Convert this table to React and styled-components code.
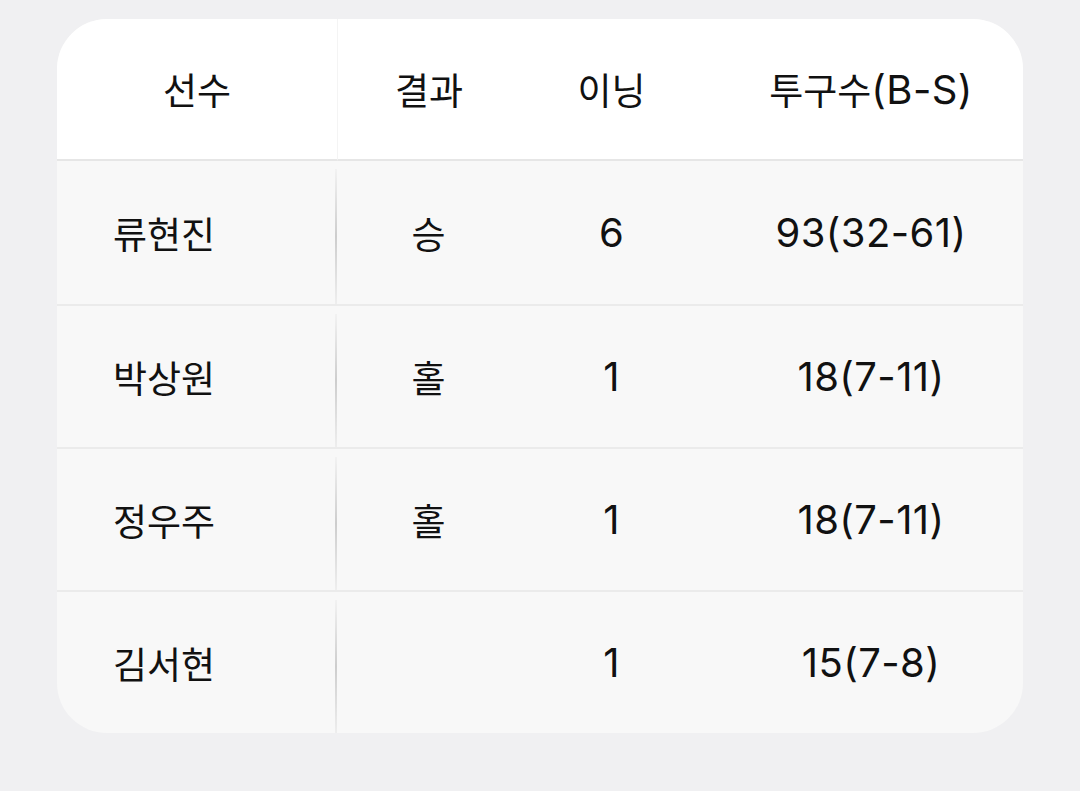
import React from 'react';
import styled, { createGlobalStyle } from 'styled-components';

const Global = createGlobalStyle`
  html, body {
    margin: 0;
    padding: 0;
    background: #f0f0f2;
  }
  body {
    font-family: Inter, "Noto Sans CJK KR", "Noto Sans", sans-serif;
    color: #111;
  }
`;

const Page = styled.div`
  width: 1080px;
  height: 791px;
  padding: 19px 0 0 57px;
  box-sizing: border-box;
`;

const Card = styled.div`
  width: 966px;
  border-radius: 50px;
  overflow: hidden;
  background: #f8f8f8;
  display: grid;
  grid-template-columns: 280px 183px 183px 1fr;
  grid-template-rows: 142px repeat(4, 143px);
`;

const HeadCell = styled.div`
  background: #fff;
  display: flex;
  align-items: center;
  justify-content: center;
  font-size: 37px;
  padding-left: ${(p) => (p.$wide ? '16px' : '0')};
  border-bottom: 2px solid #e6e6e6;
  border-left: ${(p) => (p.$divider ? '1px solid #f4f4f4' : 'none')};
`;

const Cell = styled.div`
  position: relative;
  display: flex;
  align-items: center;
  justify-content: ${(p) => (p.$left ? 'flex-start' : 'center')};
  padding-left: ${(p) => (p.$left ? '56px' : p.$wide ? '16px' : '0')};
  font-size: 37px;
  border-top: ${(p) => (p.$first ? 'none' : '2px solid #ebebeb')};
  ${(p) =>
    p.$left &&
    `
    &::after {
      content: "";
      position: absolute;
      right: 0;
      top: 8px;
      bottom: 0;
      width: 2px;
      background: linear-gradient(to bottom, #f2f2f2, #cdcdcd 50%, #eeeeee);
    }
  `}
`;

const Latin = styled.span`
  font-size: 40px;
  letter-spacing: 0.4px;
`;

const rows = [
  ['류현진', '승', '6', '93(32-61)'],
  ['박상원', '홀', '1', '18(7-11)'],
  ['정우주', '홀', '1', '18(7-11)'],
  ['김서현', '', '1', '15(7-8)'],
];

export default function App() {
  return (
    <Page>
      <Global />
      <Card>
        <HeadCell>선수</HeadCell>
        <HeadCell $divider>결과</HeadCell>
        <HeadCell>이닝</HeadCell>
        <HeadCell $wide>
          투구수<Latin>(B-S)</Latin>
        </HeadCell>
        {rows.map((r, i) => (
          <React.Fragment key={i}>
            <Cell $left $first={i === 0}>{r[0]}</Cell>
            <Cell $first={i === 0}>{r[1]}</Cell>
            <Cell $first={i === 0}>
              <Latin>{r[2]}</Latin>
            </Cell>
            <Cell $wide $first={i === 0}>
              <Latin>{r[3]}</Latin>
            </Cell>
          </React.Fragment>
        ))}
      </Card>
    </Page>
  );
}
